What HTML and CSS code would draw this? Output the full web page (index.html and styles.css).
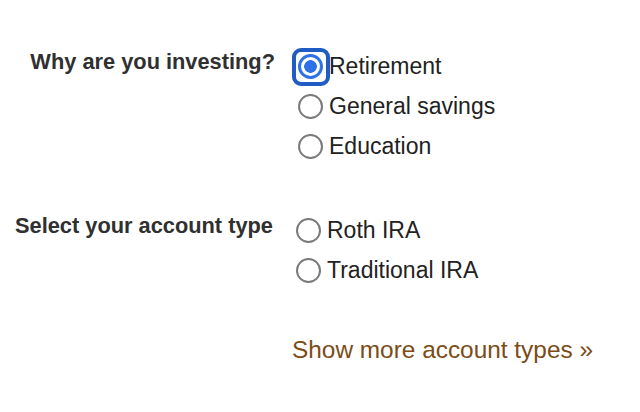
FILE: index.html
```html
<!DOCTYPE html>
<html lang="en">
<head>
<meta charset="utf-8">
<title>Investing form</title>
<link rel="stylesheet" href="styles.css">
</head>
<body>
<form class="form">
  <div class="section">
    <div class="section__label">Why are you investing?</div>
    <div class="options">
      <label class="option">
        <span class="radio-wrap radio-wrap--focus"><input class="radio" type="radio" name="why" checked></span>
        <span class="option__text">Retirement</span>
      </label>
      <label class="option">
        <span class="radio-wrap"><input class="radio" type="radio" name="why"></span>
        <span class="option__text">General savings</span>
      </label>
      <label class="option">
        <span class="radio-wrap"><input class="radio" type="radio" name="why"></span>
        <span class="option__text">Education</span>
      </label>
    </div>
  </div>
  <div class="section section--account">
    <div class="section__label">Select your account type</div>
    <div class="options">
      <label class="option">
        <span class="radio-wrap"><input class="radio" type="radio" name="acct"></span>
        <span class="option__text">Roth IRA</span>
      </label>
      <label class="option">
        <span class="radio-wrap"><input class="radio" type="radio" name="acct"></span>
        <span class="option__text">Traditional IRA</span>
      </label>
    </div>
  </div>
  <div class="section section--more">
    <div class="section__label"></div>
    <a class="more-link" href="#">Show more account types »</a>
  </div>
</form>
</body>
</html>
```
FILE: styles.css
```css
html, body {
  margin: 0;
  padding: 0;
  background: #ffffff;
}
body {
  width: 640px;
  height: 412px;
  overflow: hidden;
  font-family: "Liberation Sans", Arial, Helvetica, sans-serif;
}
.form {
  padding-top: 46px;
}
.section {
  display: grid;
  grid-template-columns: 275px 1fr;
  column-gap: 17px;
  align-items: start;
}
.section--account {
  margin-left: -2px;
  margin-top: 44px;
}
.section--more {
  margin-top: 40px;
}
.section__label {
  text-align: right;
  font-weight: bold;
  font-size: 21.8px;
  line-height: 32px;
  color: #303030;
}
.options {
  display: flex;
  flex-direction: column;
}
.option {
  display: flex;
  align-items: center;
  height: 40px;
  font-size: 23px;
  color: #222222;
  cursor: pointer;
}
.radio-wrap {
  position: relative;
  display: flex;
  margin-left: 6px;
  margin-right: 6px;
}
.radio-wrap--focus::before {
  content: "";
  position: absolute;
  left: -6.5px;
  top: -6px;
  width: 30px;
  height: 30px;
  border: 4px solid #1f5cc4;
  border-radius: 9px;
}
.radio {
  appearance: none;
  -webkit-appearance: none;
  margin: 0;
  width: 25px;
  height: 25px;
  border: 2px solid #7a7a7a;
  border-radius: 50%;
  background: #ffffff;
  box-sizing: border-box;
  position: relative;
}
.radio:checked {
  border: 3px solid #2d72e6;
  background: radial-gradient(circle, #2d72e6 0 6px, #ffffff 6.6px);
}
.radio:focus {
  outline: none;
}
.more-link {
  font-size: 24.4px;
  line-height: 40px;
  color: #7b4c17;
  text-decoration: none;
  white-space: nowrap;
}
```
